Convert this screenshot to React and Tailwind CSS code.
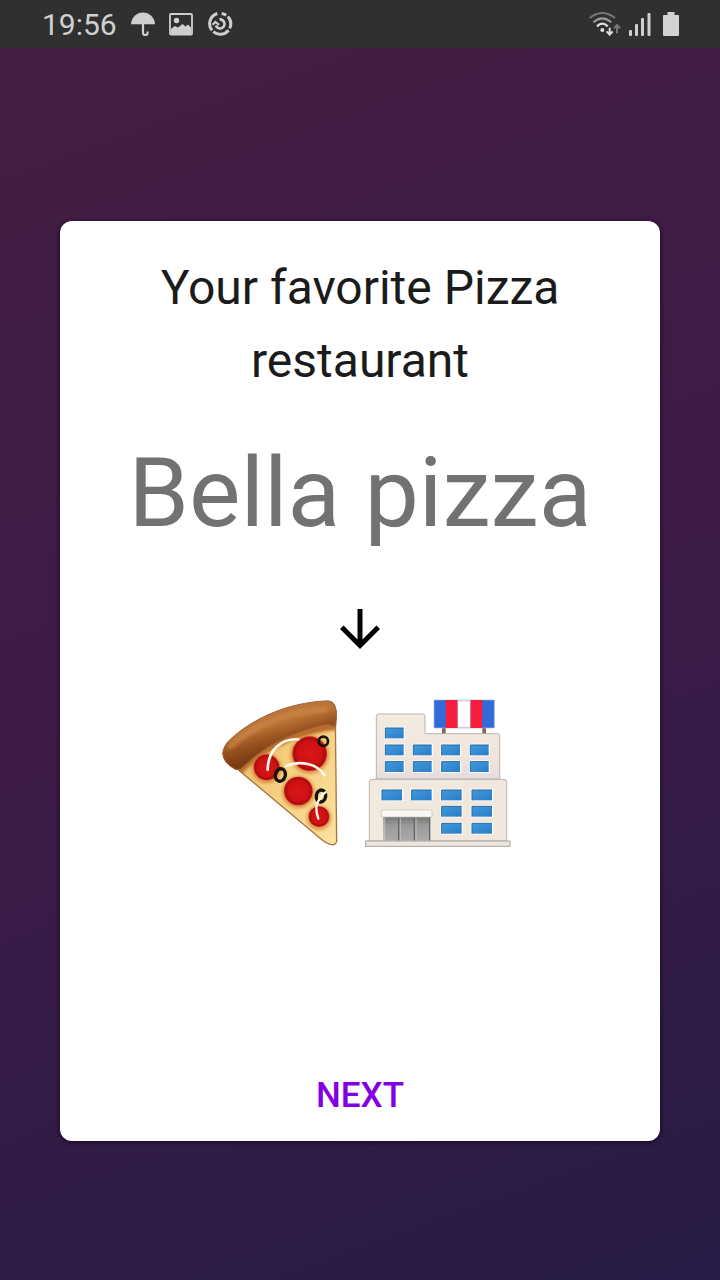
import React from "react";

function UmbrellaIcon() {
  return (
    <svg viewBox="0 0 24 24" className="h-6 w-6" aria-hidden="true">
      <path d="M0 12.3C.4 5.400 5.600.600 12 .600S23.600 5.400 24 12.300Z" fill="#cfcfcf" />
      <path d="M12 12v8.800a2.300 2.300 0 0 0 4.600 0v-1.400" fill="none" stroke="#cfcfcf" strokeWidth="2.200" />
    </svg>
  );
}

function ImageIcon() {
  return (
    <svg viewBox="0 0 24 24" className="h-6 w-6" aria-hidden="true">
      <rect x="1" y="2" width="22" height="20.500" rx="1" fill="none" stroke="#cfcfcf" strokeWidth="1.800" />
      <circle cx="7.500" cy="8.500" r="2.700" fill="#cfcfcf" />
      <path d="M2 17 5.500 14 9 15.500 13.500 12 16.500 14.500 19 12.500 22 15.500V22H2Z" fill="#cfcfcf" />
    </svg>
  );
}

function SyncIcon() {
  return (
    <svg viewBox="0 0 26 26" className="h-[26px] w-[26px]" aria-hidden="true" fill="none" stroke="#cfcfcf">
      <path d="M10.300 2.500A10.700 10.700 0 0 0 5 19.400M6.300 20.600A10.700 10.700 0 0 0 21.600 19.200M22.700 17.400A10.700 10.700 0 0 0 20.800 5.600M19.200 4.200A10.700 10.700 0 0 0 14.700 2.400" strokeWidth="3" />
      <path d="M12.500 8.400A4.500 4.500 0 1 1 8.800 14.500" strokeWidth="2.600" />
      <path d="M5.600 13.800 8.400 11 12 13.800" strokeWidth="2.200" />
    </svg>
  );
}

function WifiIcon() {
  return (
    <svg viewBox="0 0 96 72" className="h-6 w-8" aria-hidden="true" fill="none">
      <path d="M2 18Q40-12 78 18" stroke="#777" strokeWidth="6" />
      <path d="M13 31Q40 7 67 31" stroke="#9a9a9a" strokeWidth="6" />
      <path d="M24 43Q40 27 56 43" stroke="#e0e0e0" strokeWidth="7" />
      <circle cx="40" cy="54" r="6" fill="#e0e0e0" />
      <path d="M62 47v21M53 58l9 10 9-10" stroke="#dedede" strokeWidth="6" />
      <path d="M84 64V41M75 49l9-10 9 10" stroke="#777" strokeWidth="6" />
    </svg>
  );
}

function SignalIcon() {
  return (
    <svg viewBox="0 0 24 24" className="h-6 w-6" aria-hidden="true" fill="#cfcfcf">
      <rect x="0" y="18" width="3" height="6" rx="1" />
      <rect x="6" y="12" width="3" height="12" rx="1" />
      <rect x="12" y="6" width="3" height="18" rx="1" />
      <rect x="18.500" y="1" width="3" height="23" rx="1" />
    </svg>
  );
}

function BatteryIcon() {
  return (
    <svg viewBox="0 0 16 24" className="h-6 w-4" aria-hidden="true" fill="#d2d2d2">
      <path d="M4.500 0h7v3H15q1 0 1 1v19q0 1-1 1H1q-1 0-1-1V4q0-1 1-1h3.500Z" />
    </svg>
  );
}

const pepperoni = [
  [170, 229, 39],
  [299, 188, 52],
  [265, 300, 43],
  [327, 377, 31],
];

function PizzaSlice() {
  return (
    <svg viewBox="0 0 420 495" className="h-[165px] w-[140px]" role="img" aria-label="Pizza slice">
      <defs>
        <linearGradient id="crust" gradientUnits="userSpaceOnUse" x1="190" y1="62" x2="224" y2="180">
          <stop offset="0" stopColor="#b9753b" />
          <stop offset="0.300" stopColor="#bb7234" />
          <stop offset="0.650" stopColor="#95501d" />
          <stop offset="1" stopColor="#7b3c13" />
        </linearGradient>
        <linearGradient id="cheese" x1="0" y1="0" x2="1" y2="1">
          <stop offset="0" stopColor="#e9ab58" />
          <stop offset="0.400" stopColor="#f4cd7e" />
          <stop offset="1" stopColor="#fbe3a0" />
        </linearGradient>
        <radialGradient id="sausage">
          <stop offset="0" stopColor="#d81818" />
          <stop offset="0.720" stopColor="#cf1014" />
          <stop offset="0.900" stopColor="#a90d10" />
          <stop offset="1" stopColor="#c82520" />
        </radialGradient>
        <filter id="soft" x="-20%" y="-20%" width="140%" height="140%">
          <feGaussianBlur stdDeviation="5" />
        </filter>
        <clipPath id="slice">
          <path d="M82 234L110 180Q230 90 376 80L380 451Q376 465 360 460Q346 455 332 443Z" />
        </clipPath>
      </defs>
      <path d="M82 234L110 180Q230 90 376 80L380 451Q376 465 360 460Q346 455 332 443Z" fill="url(#cheese)" stroke="#a97342" strokeWidth="4" />
      <g clipPath="url(#slice)">
        <path d="M84 242Q200 124 382 104" fill="none" stroke="#b96c29" strokeWidth="24" filter="url(#soft)" />
        {pepperoni.map(([x, y, r]) => (
          <circle key={x} cx={x} cy={y + 3} r={r + 6} fill="#d5782f" opacity="0.700" filter="url(#soft)" />
        ))}
      </g>
      {pepperoni.map(([x, y, r]) => (
        <circle key={x} cx={x} cy={y} r={r} fill="url(#sausage)" />
      ))}
      <path d="M38 188Q40 164 61 145C133 79 235 36 344 30Q366 27 374 42Q382 58 379 84L377 106Q353 96 331 104C237 128 159 167 102 226Q94 237 78 236Q40 217 38 188Z" fill="url(#crust)" stroke="#9b6238" strokeWidth="3" />
      <path d="M62 165C135 99 244 59 344 55" fill="none" stroke="#cc8948" strokeWidth="20" strokeLinecap="round" opacity="0.600" filter="url(#soft)" />
      <g fill="none" stroke="#15130b" strokeWidth="10">
        <ellipse cx="211" cy="252" rx="15" ry="19" transform="rotate(15 211 252)" />
        <ellipse cx="340" cy="151" rx="14" ry="14" strokeWidth="8" />
        <ellipse cx="333" cy="315" rx="14" ry="18" transform="rotate(10 333 315)" />
      </g>
      <g fill="none" stroke="#fff9ec" strokeLinecap="round">
        <path d="M173 236C174 177 213 142 265 145" strokeWidth="8" />
        <path d="M229 225C270 207 322 218 344 253" strokeWidth="8" />
        <path d="M325 383C317 361 317 339 328 325Q338 308 347 304" strokeWidth="7" />
      </g>
    </svg>
  );
}

const upperWindows = [
  [91, 111], [91, 162], [175, 162], [260, 162], [346, 162],
  [91, 212], [175, 212], [260, 212], [346, 212],
];
const lowerWindows = [
  [81, 297], [170, 297], [260, 297], [351, 297],
  [260, 346], [351, 346], [260, 397], [351, 397],
];

function Windows({ items, width }) {
  return items.map(([x, y]) => (
    <g key={`${x}-${y}`}>
      <rect x={x - 4} y={y - 4} width={width + 8} height="38" fill="#fbfbfb" />
      <rect x={x} y={y} width={width} height="31" fill="url(#glass)" />
      <path d={`M${x} ${y + 31}V${y}H${x + width}`} fill="none" stroke="#286b9d" strokeWidth="3" />
    </g>
  ));
}

function Building() {
  return (
    <svg viewBox="-3 0 468 495" className="h-[165px] w-[156px] overflow-visible" role="img" aria-label="Store with a striped sign">
      <defs>
        <linearGradient id="wall" x1="0" y1="0" x2="1" y2="0">
          <stop offset="0" stopColor="#f2e9df" />
          <stop offset="1" stopColor="#f0e6db" />
        </linearGradient>
        <linearGradient id="upper" x1="0" y1="0" x2="0" y2="1">
          <stop offset="0" stopColor="#f4ebe1" />
          <stop offset="0.750" stopColor="#eee4dc" />
          <stop offset="1" stopColor="#e4dcdf" />
        </linearGradient>
        <linearGradient id="glass" x1="0" y1="0" x2="1" y2="1">
          <stop offset="0" stopColor="#409bd8" />
          <stop offset="0.500" stopColor="#368cd3" />
          <stop offset="1" stopColor="#2a7bc8" />
        </linearGradient>
        <linearGradient id="door" x1="0" y1="0" x2="0" y2="1">
          <stop offset="0" stopColor="#737373" />
          <stop offset="0.400" stopColor="#9b9b9b" />
          <stop offset="1" stopColor="#aaa" />
        </linearGradient>
      </defs>
      <path d="M261 108h11v22h-11ZM382 108h11v22h-11Z" fill="#8c624f" />
      <path d="M64 264V76Q64 69 72 69H204Q210 69 210 76V128H427Q434 128 434 135V264Z" fill="url(#upper)" stroke="#bbb4af" strokeWidth="3" />
      <path d="M237 27H418V111H237Z" fill="#316bd9" stroke="#a9b5d2" strokeWidth="2" />
      <path d="M272 27h36v84h-36ZM346 27h36v84h-36Z" fill="#f51f3d" />
      <path d="M308 28h38v80h-38Z" fill="#fff" />
      <path d="M308 30h38M308 109h38" stroke="#ddd" strokeWidth="3" />
      <Windows items={upperWindows} width={55} />
      <path d="M43 450V273Q43 265 52 265H447Q455 265 455 273V450Z" fill="url(#wall)" stroke="#bbb4af" strokeWidth="3" />
      <Windows items={lowerWindows} width={60} />
      <rect x="85" y="375" width="140" height="74" fill="url(#door)" />
      <path d="M131 380V449M178 380V449M224 378V449" stroke="#636363" strokeWidth="4" />
      <path d="M89 380V449M136 380V449M183 380V449" stroke="#ccc" strokeWidth="3" opacity="0.700" />
      <rect x="79" y="357" width="152" height="21" rx="3" fill="#faf7f2" stroke="#c4beb8" strokeWidth="2" />
      <rect x="32" y="450" width="433" height="16" fill="#ebe5de" stroke="#aaa39e" strokeWidth="3" />
    </svg>
  );
}

export default function App() {
  return (
    <div className="flex min-h-screen flex-col bg-[#351b45] font-['Roboto','Liberation_Sans',sans-serif]">
      <header className="flex h-12 items-center justify-between bg-[#303030] pr-[41px] pl-[42px]">
        <div className="flex items-center">
          <time className="mr-3.5 pt-0.5 text-[30px] leading-9 text-[#d0d0d0]">19:56</time>
          <div className="flex items-center gap-3.5">
            <UmbrellaIcon />
            <ImageIcon />
            <SyncIcon />
          </div>
        </div>
        <div className="flex items-center gap-2">
          <WifiIcon />
          <div className="flex items-center gap-2.5">
            <SignalIcon />
            <BatteryIcon />
          </div>
        </div>
      </header>
      <main className="flex flex-1 flex-col bg-linear-160 from-[#441e42] via-[#3c1b47] to-[#261c45] px-[60px] pt-[173px] pb-[139px]">
        <section className="flex flex-1 flex-col items-center rounded-xl bg-white px-8 pt-[30px] pb-3 shadow-[0_1px_4px_1px_rgba(20,0,30,0.6)]">
          <h1 className="max-w-[440px] text-center text-[48px] leading-[73px] text-[#1b1b1b]">
            Your favorite Pizza restaurant
          </h1>
          <p className="mt-10 text-center text-[97px] leading-[112px] text-[#727272]">Bella pizza</p>
          <svg viewBox="0 0 24 24" className="mt-[50px] h-[60px] w-[60px]" aria-hidden="true">
            <path d="M20 12l-1.410-1.410L13 16.170V4h-2v12.170l-5.580-5.590L4 12l8 8 8-8z" fill="#000" />
          </svg>
          <div className="mt-8 flex justify-center gap-1">
            <PizzaSlice />
            <Building />
          </div>
          <button type="button" className="mt-auto rounded px-8 py-3 text-[35px] leading-[42px] font-medium text-[#8300e3]">
            NEXT
          </button>
        </section>
      </main>
    </div>
  );
}
